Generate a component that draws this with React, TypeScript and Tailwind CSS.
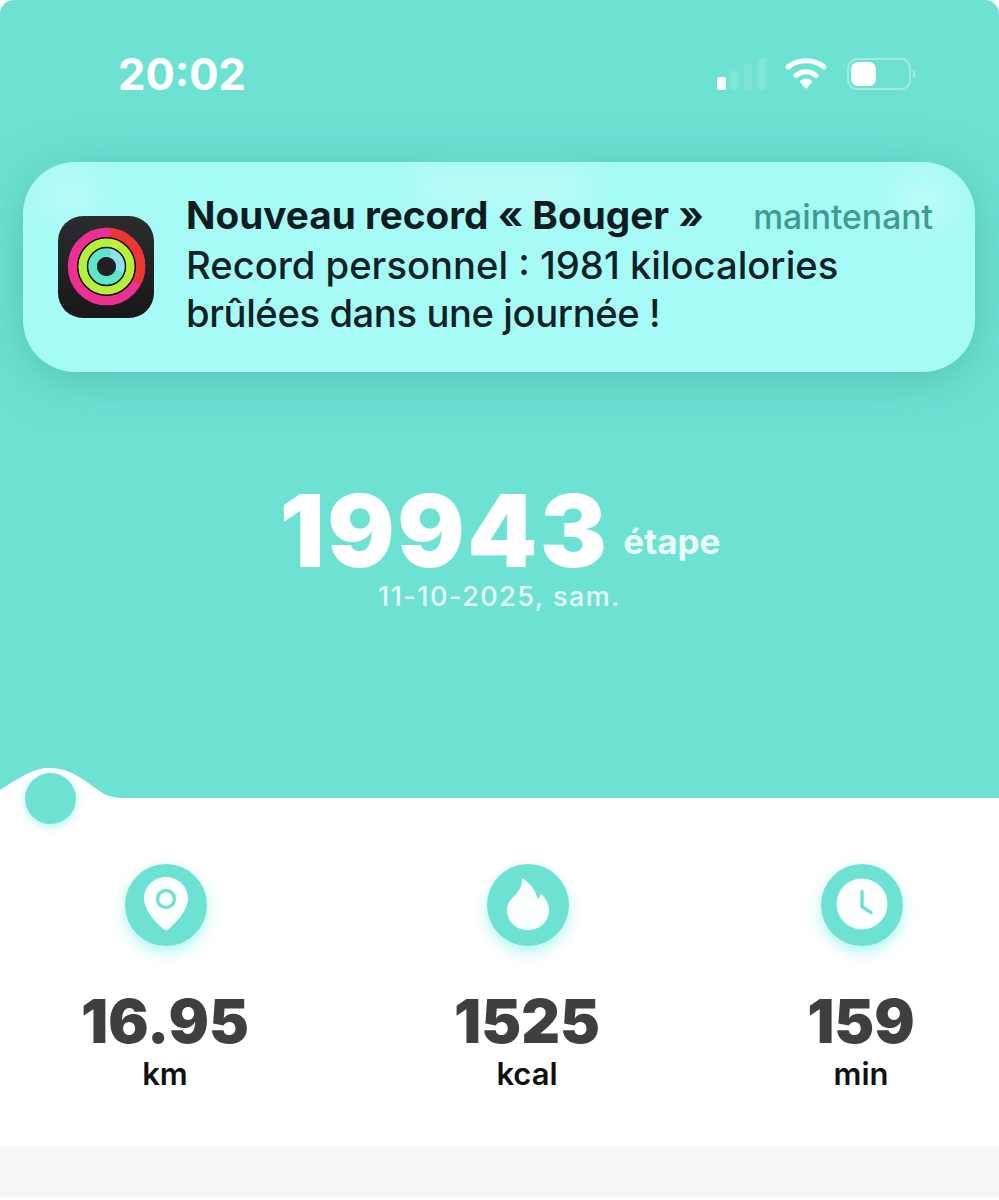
const F = { fontFamily: 'Inter, "Liberation Sans", sans-serif' };

function Signal() {
  return (
    <svg width="50" height="34" viewBox="0 0 50 34">
      <rect x="1" y="20" width="9" height="13" rx="2.5" fill="#fff" />
      <rect x="14" y="14" width="8" height="19" rx="2" fill="#fff" opacity="0.12" />
      <rect x="28" y="7" width="8" height="26" rx="2" fill="#fff" opacity="0.12" />
      <rect x="42" y="1" width="8" height="32" rx="2" fill="#fff" opacity="0.12" />
    </svg>
  );
}

function Wifi() {
  return (
    <svg width="44" height="34" viewBox="0 0 44 34" fill="none" stroke="#fff" strokeWidth="5" strokeLinecap="round">
      <path d="M4 10 C14 1.5 30 1.5 40 10" />
      <path d="M12 18.5 C18 13.5 26 13.5 32 18.5" />
      <path d="M17 24.5 L22 30.5 L27 24.5 C24 22 20 22 17 24.5Z" fill="#fff" stroke="#fff" strokeWidth="2" strokeLinejoin="round" />
    </svg>
  );
}

function Battery() {
  return (
    <svg width="72" height="34" viewBox="0 0 72 34">
      <rect x="2" y="2" width="62" height="30" rx="9" fill="none" stroke="#fff" strokeOpacity="0.35" strokeWidth="2" />
      <rect x="5" y="5" width="25" height="24" rx="7" fill="#fff" />
      <path d="M67 13 C70 14.5 70 19.5 67 21Z" fill="#fff" opacity="0.4" />
    </svg>
  );
}

function ActivityIcon() {
  const Ring = ({ r, w, base, tip, f }: { r: number; w: number; base: string; tip: string; f: number }) => {
    const c = 2 * Math.PI * r;
    return (
      <g>
        <circle cx="48.5" cy="50.5" r={r} fill="none" stroke={base} strokeWidth={w} />
        <circle cx="48.5" cy="50.5" r={r} fill="none" stroke={tip} strokeWidth={w} strokeDasharray={`${c * f} ${c}`} transform="rotate(-90 48.5 50.5)" />
        <circle cx="48.5" cy={50.5 - r} r={w / 2} fill={base} />
      </g>
    );
  };
  return (
    <svg width="96" height="102" viewBox="0 0 96 102" className="shrink-0">
      <defs>
        <linearGradient id="tile" x1="0" y1="0" x2="0" y2="1">
          <stop offset="0" stopColor="#2c2c2e" />
          <stop offset="1" stopColor="#18181a" />
        </linearGradient>
      </defs>
      <rect x="0" y="0" width="96" height="102" rx="25" fill="url(#tile)" />
      <Ring r="34" w="9.5" base="#ec2f93" tip="#ee3535" f={0.33} />
      <Ring r="24" w="9" base="#b5f03c" tip="#c8ee3a" f={0.08} />
      <Ring r="14" w="9" base="#5ce8c8" tip="#8fe2f4" f={0.3} />
      <circle cx="48.5" cy="50.5" r="28.8" fill="none" stroke="#111" strokeWidth="1.4" />
      <circle cx="48.5" cy="50.5" r="19" fill="none" stroke="#111" strokeWidth="1.4" />
      <circle cx="48.5" cy="50.5" r="9.5" fill="#202022" />
    </svg>
  );
}

function Pin() {
  return (
    <svg width="44" height="54" viewBox="0 0 44 54">
      <path d="M22 0 C34 0 44 9.5 44 21.5 C44 33 32 46 24 52.5 C22.8 53.5 21.2 53.5 20 52.5 C12 46 0 33 0 21.5 C0 9.5 10 0 22 0Z" fill="#fbfffe" />
      <circle cx="22" cy="22" r="8.5" fill="none" stroke="#6de2d3" strokeWidth="3.4" />
    </svg>
  );
}

function Flame() {
  return (
    <svg width="42" height="52" viewBox="0 0 42 52">
      <path d="M15 0 C23 5 29 12 30.5 21 C32.5 20 33.5 18 34 15.5 C38.5 20 42 26 42 32 C42 43.5 33 52 21 52 C9 52 0 43.5 0 32 C0 24 5.5 20 10 15 C13.5 11 15.5 6 15 0Z" fill="#fbfffe" />
    </svg>
  );
}

function Clock() {
  return (
    <svg width="52" height="52" viewBox="0 0 52 52">
      <circle cx="26" cy="26" r="25.5" fill="#fbfffe" />
      <path d="M26 13.5 V28.5 L35 34.5" fill="none" stroke="#6de2d3" strokeWidth="3.4" strokeLinecap="round" strokeLinejoin="round" />
    </svg>
  );
}

function Stat({ icon, value, unit, className }: { icon: React.ReactNode; value: string; unit: string; className: string }) {
  return (
    <div className={`flex flex-col items-center ${className}`}>
      <div className="ml-[2px] flex h-[82px] w-[82px] items-center justify-center rounded-full bg-[#6de2d3] pb-[3px] shadow-[0_6px_14px_rgba(109,240,225,0.55)]">
        {icon}
      </div>
      <div className="mt-[39px] text-[60px] leading-[72px] font-black text-[#3f3f41]">{value}</div>
      <div className="mt-[-1px] text-[31px] leading-[36px] font-semibold text-[#111113]">{unit}</div>
    </div>
  );
}

export default function App() {
  return (
    <div style={F} className="relative h-[1200px] w-[999px] overflow-hidden bg-white">
      <div className="flex h-[798px] flex-col rounded-t-[14px] bg-[#6de2d3]">
        <div className="flex h-[162px] items-start justify-between pt-[52px] pr-[81px] pl-[118px]">
          <div className="mt-[-2px] text-[43.5px] leading-[48px] font-bold text-white">20:02</div>
          <div className="mt-[5px] flex items-center gap-[18px]">
            <Signal />
            <Wifi />
            <Battery />
          </div>
        </div>

        <div className="relative mx-[23px] flex h-[210px] w-[952px] items-center gap-[32px] overflow-visible rounded-[52px] bg-[#a7fbf7] pr-[42px] pl-[35px] text-[#0e2124] shadow-[0_8px_46px_rgba(60,165,155,0.5)]">
          <div className="absolute top-[14px] left-[22px] h-[40px] w-[50px] rounded-full bg-white/25 blur-[14px]" />
          <div className="absolute top-[10px] left-[395px] h-[34px] w-[170px] rounded-full bg-white/25 blur-[14px]" />
          <div className="absolute top-[14px] right-[22px] h-[50px] w-[60px] rounded-full bg-white/25 blur-[14px]" />
          <div className="relative">
            <ActivityIcon />
          </div>
          <div className="relative min-w-0 flex-1 pb-[7px]">
            <div className="flex items-baseline justify-between">
              <span className="text-[38.7px] leading-[48px] font-bold text-[#0c1c1f]">Nouveau record « Bouger »</span>
              <span className="text-[33.7px] leading-[48px] font-medium text-[#3f9b90]">maintenant</span>
            </div>
            <div className="text-[38.2px] leading-[48px] font-medium">Record personnel : 1981 kilocalories</div>
            <div className="text-[38.2px] leading-[48px] font-medium tracking-[-0.4px]">brûlées dans une journée !</div>
          </div>
        </div>

        <div className="mt-[111px] flex flex-col items-center">
          <div className="flex items-center pl-[1px]">
            <span className="text-[100px] leading-[96px] font-black tracking-[2.5px] text-white">19943</span>
            <span className="mt-[20px] ml-[14px] text-[35px] leading-[42px] font-bold text-[#e9fcf9]">étape</span>
          </div>
          <div className="mt-[1px] text-[27px] leading-[34px] font-medium tracking-[1.5px] text-[#e9fbf9]">11-10-2025, sam.</div>
        </div>
      </div>

      <svg className="absolute top-[766px] left-0" width="124" height="33" viewBox="0 0 124 33">
        <path d="M0 24 C22 10 34 2 50 2 C70 2 84 14 98 24 C106 30 112 32 124 32 V33 H0Z" fill="#fff" />
      </svg>
      <div className="absolute top-[773px] left-[25px] h-[51px] w-[51px] rounded-full bg-[#6de2d3] shadow-[0_3px_8px_rgba(109,240,225,0.55)]" />

      <div className="flex h-[348px] items-start pt-[66px]">
        <Stat className="ml-[81px] w-[168px]" icon={<Pin />} value="16.95" unit="km" />
        <Stat className="ml-[203px] w-[150px]" icon={<Flame />} value="1525" unit="kcal" />
        <Stat className="ml-[203px] w-[112px]" icon={<Clock />} value="159" unit="min" />
      </div>

      <div className="h-[51px] bg-[#f6f6f6]" />
    </div>
  );
}
